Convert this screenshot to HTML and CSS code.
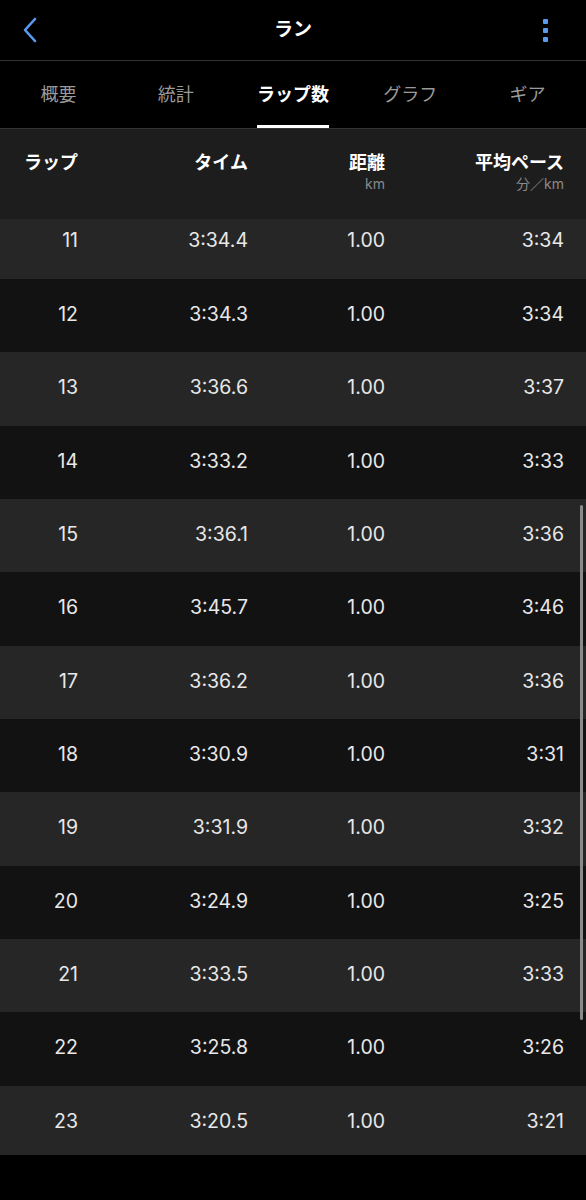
FILE: index.html
```html
<!DOCTYPE html>
<html lang="ja">
<head>
<meta charset="utf-8">
<link rel="stylesheet" href="styles.css">
</head>
<body>
<div class="screen">
  <header class="topbar">
    <svg class="back" width="16" height="26" viewBox="0 0 16 26"><path d="M13 2 L3 13 L13 24" fill="none" stroke="#5b9bef" stroke-width="2.6" stroke-linecap="round" stroke-linejoin="round"/></svg>
    <div class="title">ラン</div>
    <div class="more"><span></span><span></span><span></span></div>
  </header>
  <nav class="tabs">
    <div class="tab">概要</div>
    <div class="tab">統計</div>
    <div class="tab active"><span>ラップ数</span></div>
    <div class="tab">グラフ</div>
    <div class="tab">ギア</div>
  </nav>
  <div class="table">
    <div class="head">
      <div class="hc"><div class="h">ラップ</div></div>
      <div class="hc"><div class="h">タイム</div></div>
      <div class="hc"><div class="h">距離</div><div class="u">km</div></div>
      <div class="hc"><div class="h">平均ペース</div><div class="u">分／km</div></div>
    </div>
    <div class="row odd first"><div>11</div><div>3:34.4</div><div>1.00</div><div>3:34</div></div>
    <div class="row even"><div>12</div><div>3:34.3</div><div>1.00</div><div>3:34</div></div>
    <div class="row odd"><div>13</div><div>3:36.6</div><div>1.00</div><div>3:37</div></div>
    <div class="row even"><div>14</div><div>3:33.2</div><div>1.00</div><div>3:33</div></div>
    <div class="row odd"><div>15</div><div>3:36.1</div><div>1.00</div><div>3:36</div></div>
    <div class="row even"><div>16</div><div>3:45.7</div><div>1.00</div><div>3:46</div></div>
    <div class="row odd"><div>17</div><div>3:36.2</div><div>1.00</div><div>3:36</div></div>
    <div class="row even"><div>18</div><div>3:30.9</div><div>1.00</div><div>3:31</div></div>
    <div class="row odd"><div>19</div><div>3:31.9</div><div>1.00</div><div>3:32</div></div>
    <div class="row even"><div>20</div><div>3:24.9</div><div>1.00</div><div>3:25</div></div>
    <div class="row odd"><div>21</div><div>3:33.5</div><div>1.00</div><div>3:33</div></div>
    <div class="row even"><div>22</div><div>3:25.8</div><div>1.00</div><div>3:26</div></div>
    <div class="row odd last"><div>23</div><div>3:20.5</div><div>1.00</div><div>3:21</div></div>
    <div class="scrollbar"></div>
  </div>
</div>
</body>
</html>
```
FILE: styles.css
```css
html, body {
  margin: 0;
  padding: 0;
  background: #000;
}
body {
  font-family: Inter, "Noto Sans CJK JP", sans-serif;
  color: #e8e8e8;
}
.screen {
  width: 586px;
  height: 1200px;
  background: #000;
  overflow: hidden;
}
.topbar {
  height: 60px;
  display: flex;
  align-items: center;
  justify-content: space-between;
  padding: 0 38px 0 22px;
  border-bottom: 1px solid #333;
  position: relative;
}
.back {
  display: block;
}
.title {
  position: absolute;
  left: 0;
  right: 0;
  text-align: center;
  top: 16px;
  font-size: 19px;
  font-weight: 700;
  color: #fff;
  line-height: 28px;
}
.more {
  display: flex;
  flex-direction: column;
  gap: 4px;
}
.more span {
  width: 5px;
  height: 5px;
  background: #5b9bef;
  border-radius: 1px;
}
.tabs {
  display: grid;
  grid-template-columns: repeat(5, 1fr);
  height: 67px;
  border-bottom: 1px solid #333;
}
.tab {
  display: flex;
  justify-content: center;
  align-items: center;
  font-size: 18px;
  color: #9a9a9a;
  padding-bottom: 4px;
}
.tab.active {
  padding-bottom: 0;
}
.tab.active span {
  color: #fff;
  font-weight: 700;
  height: 100%;
  display: flex;
  align-items: center;
  box-sizing: border-box;
  border-bottom: 3px solid #fff;
  padding-bottom: 1px;
}
.table {
  position: relative;
}
.head, .row {
  display: grid;
  grid-template-columns: 78px 170px 137px 179px;
  padding-right: 22px;
}
.head {
  height: 90px;
  background: #1d1d1d;
  box-sizing: border-box;
  padding-top: 21px;
  align-items: start;
}
.hc {
  text-align: right;
}
.h {
  font-size: 18px;
  font-weight: 700;
  color: #fff;
  line-height: 26px;
}
.u {
  font-size: 14px;
  color: #8a8a8a;
  line-height: 16px;
}
.row {
  height: 73.33px;
  align-items: center;
  font-size: 19.5px;
  font-weight: 400;
  text-align: right;
  box-sizing: border-box;
  padding-bottom: 3px;
}
.row.first {
  height: 60px;
  padding-bottom: 18px;
}
.row.last {
  height: 69px;
  padding-bottom: 0;
  padding-top: 1px;
}
.odd { background: #262626; }
.even { background: #121212; }
.scrollbar {
  position: absolute;
  right: 3px;
  top: 376px;
  width: 3px;
  height: 515px;
  border-radius: 2px;
  background: #8a8a8a;
}
```
